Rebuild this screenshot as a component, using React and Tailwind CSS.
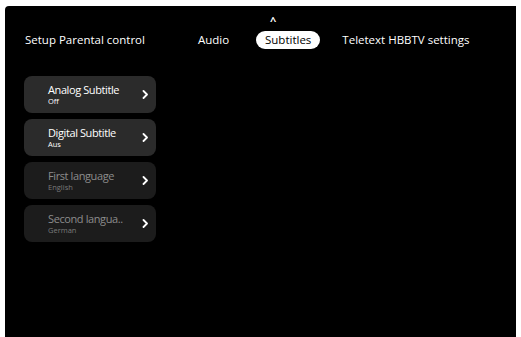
import React from 'react';

const items = [
  { title: 'Analog Subtitle', value: 'Off', enabled: true },
  { title: 'Digital Subtitle', value: 'Aus', enabled: true },
  { title: 'First language', value: 'English', enabled: false },
  { title: 'Second langua..', value: 'German', enabled: false },
];

function Chevron() {
  return (
    <svg width="7" height="9" viewBox="0 0 7 9" className="shrink-0">
      <path d="M1.5 1 L5 4.5 L1.5 8" fill="none" stroke="#fff" strokeWidth="1.8" strokeLinecap="round" strokeLinejoin="round" />
    </svg>
  );
}

function MenuCard({ title, value, enabled }) {
  return (
    <div
      className={`flex h-[37px] w-[132px] items-center justify-between rounded-[8px] pl-[24px] pr-[7px] ${
        enabled ? 'bg-[#2b2b2b]' : 'bg-[#1c1c1c]'
      }`}
    >
      <div className="flex flex-col leading-none">
        <span className={`text-[11px] tracking-[-0.4px] ${enabled ? 'text-white' : 'text-[#8c8c8c]'}`}>{title}</span>
        <span className={`mt-[3px] text-[7.5px] ${enabled ? 'text-white' : 'text-[#7a7a7a]'}`}>{value}</span>
      </div>
      <Chevron />
    </div>
  );
}

export default function App() {
  return (
    <div className="h-[337px] w-[521px] bg-white pl-[5px] pr-[5px] pt-[6px]" style={{ fontFamily: '"Open Sans", sans-serif' }}>
      <div className="flex h-[331px] flex-col rounded-tl-[4px] bg-black">
        <div className="relative mt-[25px] flex h-[18px] items-center text-[11.5px] text-white">
          <span className="ml-[20px] w-[173px]">Setup Parental control</span>
          <span className="w-[58px]">Audio</span>
          <div className="relative">
            <span className="absolute left-[14px] top-[-16px] text-[11px] font-bold leading-none">^</span>
            <span className="flex h-[18px] items-center rounded-full bg-white px-[9px] text-black">Subtitles</span>
          </div>
          <span className="ml-[22px]">Teletext HBBTV settings</span>
        </div>
        <div className="ml-[19px] mt-[27px] flex flex-col gap-[6px]">
          {items.map((it) => (
            <MenuCard key={it.title} {...it} />
          ))}
        </div>
      </div>
    </div>
  );
}
